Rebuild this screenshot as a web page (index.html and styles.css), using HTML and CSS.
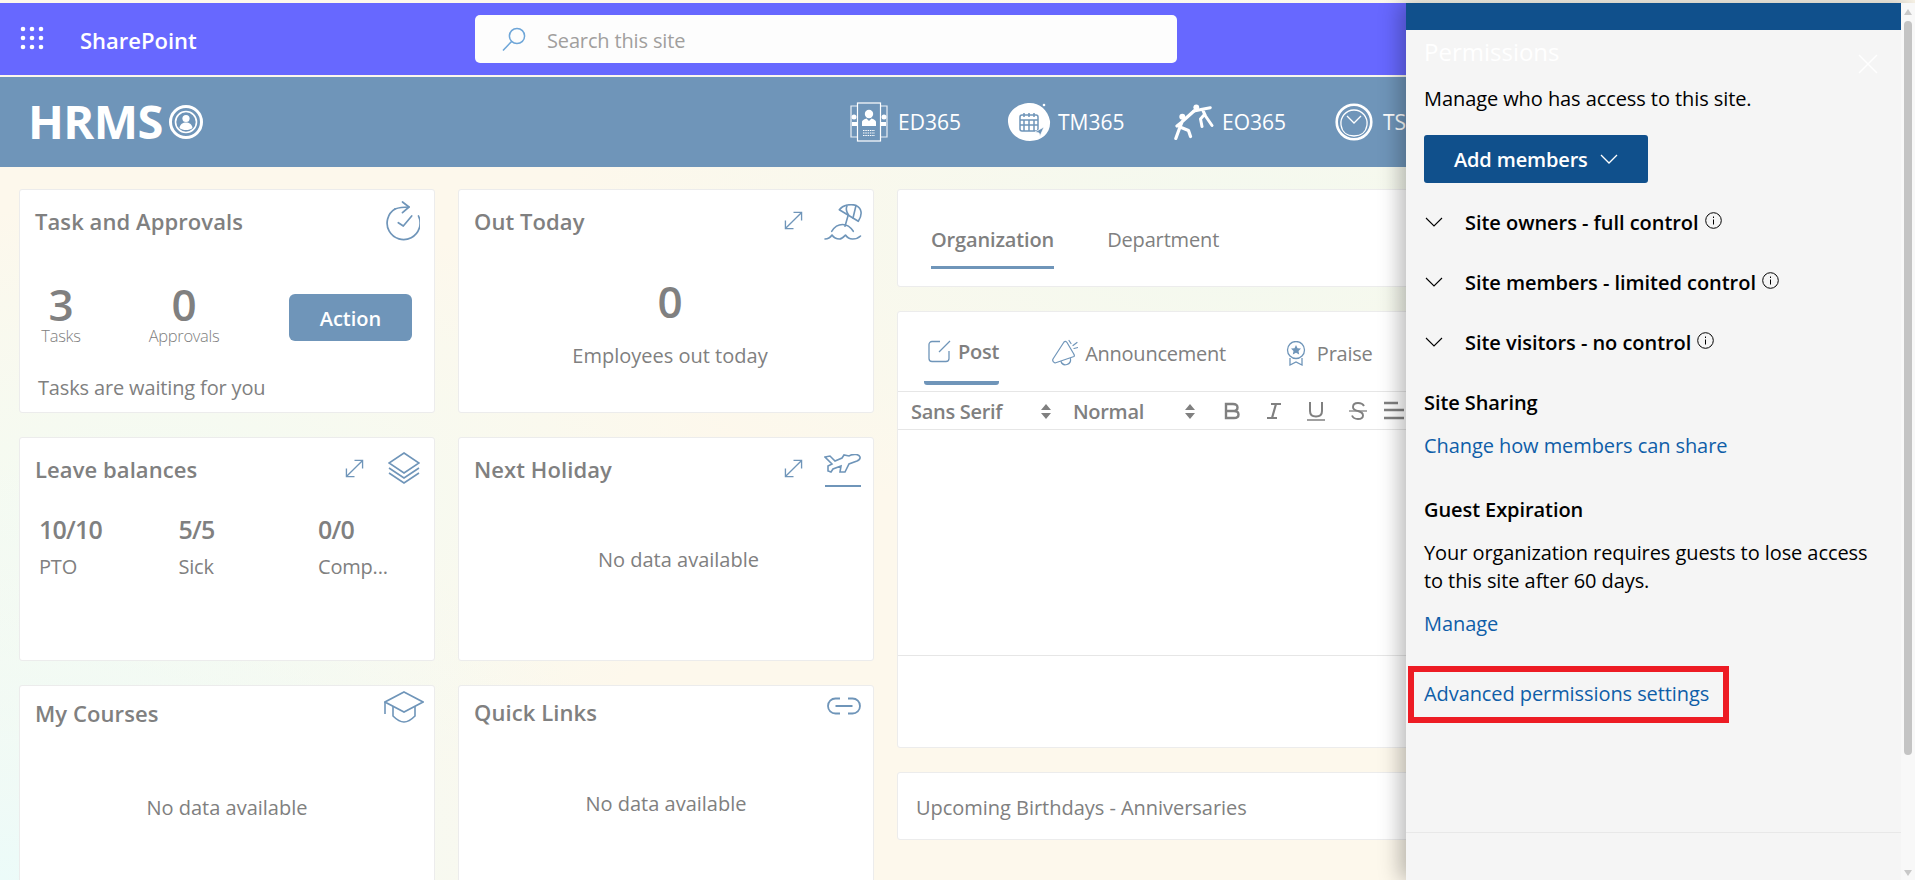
FILE: index.html
```html
<!DOCTYPE html>
<html lang="en">
<head>
<meta charset="utf-8">
<title>HRMS - SharePoint</title>
<link rel="stylesheet" href="styles.css">
</head>
<body>
<div class="page">
  <header class="suitebar">
    <svg class="waffle" viewBox="0 0 24 24" width="24" height="24" fill="#fff"><circle cx="3" cy="3" r="2.3"/><circle cx="12" cy="3" r="2.3"/><circle cx="21" cy="3" r="2.3"/><circle cx="3" cy="12" r="2.3"/><circle cx="12" cy="12" r="2.3"/><circle cx="21" cy="12" r="2.3"/><circle cx="3" cy="21" r="2.3"/><circle cx="12" cy="21" r="2.3"/><circle cx="21" cy="21" r="2.3"/></svg>
    <span class="brand">SharePoint</span>
    <div class="search">
      <svg viewBox="0 0 24 24" width="24" height="24" fill="none" stroke="#6ea6d8" stroke-width="1.5"><circle cx="15" cy="9" r="7.6"/><path d="M9.6 14.4 1 23.5"/></svg>
      <span>Search this site</span>
    </div>
  </header>

  <nav class="sitebar">
    <div class="logo">
      <span class="logo-text">HRMS</span>
      <svg viewBox="0 0 34 34" width="34" height="34" fill="none" stroke="#fff"><circle cx="17" cy="17" r="15.5" stroke-width="3"/><circle cx="17" cy="17" r="10.5" stroke-width="1.6"/><circle cx="17" cy="13.5" r="3.6" fill="#fff" stroke="none"/><path d="M10.5 23c.6-4 3.400-5.500 6.500-5.500s5.900 1.500 6.500 5.500c-1.800 1.400-4 2-6.500 2s-4.700-.6-6.500-2z" fill="#fff" stroke="none"/></svg>
    </div>
    <div class="apps">
      <div class="app app-ed">
        <svg viewBox="0 0 38 40" width="38" height="40" fill="none" stroke="#fff" stroke-width="1.2"><path d="M7 4H1v31h6M31 4h6v31h-6" opacity=".85"/><rect x="7.500" y="1" width="23" height="38"/><circle cx="19" cy="12" r="4.200" fill="#fff" stroke="none"/><path d="M12 24v-4c0-2 3-3 4.500-3.500L19 19l2.500-2.500C23 17 26 18 26 20v4z" fill="#fff" stroke="none"/><path d="M13 28.500h12M13 31h12M13 33.500h12" stroke-dasharray="1.500 .8"/><circle cx="4" cy="15" r="2.500" fill="#fff" stroke="none"/><circle cx="34" cy="15" r="2.500" fill="#fff" stroke="none"/><path d="M2 24v-4h5v4zM31 24v-4h5v4z" fill="#fff" stroke="none"/></svg>
        <span>ED365</span>
      </div>
      <div class="app app-tm">
        <svg viewBox="0 0 44 40" width="44" height="40"><path d="M20 1c10-1 20 6 22 18 1 12-8 20-20 20C10 39 1 31 0 20-1 10 9 2 20 1z" fill="#fff"/><circle cx="36" cy="3" r="1.300" fill="#fff"/><g fill="none" stroke="#6f95b9" stroke-width="1.500"><rect x="12" y="13" width="18" height="16" rx="2"/><path d="M16 11v4M21 11v4M26 11v4M12 18h18M16 18v11M21 18v11M26 18v11M12 23h18"/><path d="M27 30l9-5-4 9-1-3z" fill="#6f95b9" stroke="#fff" stroke-width=".7"/></g></svg>
        <span>TM365</span>
      </div>
      <div class="app app-eo">
        <svg viewBox="0 0 40 36" width="40" height="36" fill="none" stroke="#fff" stroke-width="3.200" stroke-linecap="round" stroke-linejoin="round"><circle cx="8.300" cy="12.700" r="3" fill="#fff" stroke="none"/><circle cx="22.300" cy="3.300" r="2.900" fill="#fff" stroke="none"/><path d="M8.300 17.500 20 7M8.300 17.500 6 23M8 18l-5 4M6 23 1.800 34.500M6 23l8.500 3.500 2 6"/><path d="M20 7l8.300-1.800 8-1.500M28.500 5.500 31.500 12l6.500 9.500M30 11l-3.500 4 1.500 7.500" stroke-width="3"/></svg>
        <span>EO365</span>
      </div>
      <div class="app app-ts">
        <svg viewBox="0 0 38 38" width="38" height="38" fill="none" stroke="#fff"><circle cx="19" cy="19" r="17.300" stroke-width="2.600"/><path d="M6 22c-1-8 5-15 13-15s14 7 13 15c-1 7-6 11-13 11S7 29 6 22z" stroke-width="1.300"/><path d="M12 13l7 7 7-7" stroke-width="1.300"/></svg>
        <span>TS365</span>
      </div>
    </div>
  </nav>

  <main class="board">
    <section class="card card-task">
      <div class="card-head">
        <h2>Task and Approvals</h2>
        <svg class="ico ico-task" viewBox="0 0 34 40" width="34" height="40" fill="none" stroke="#6f95b9" stroke-width="1.700" stroke-linecap="round" stroke-linejoin="round"><path d="M9 8A16.500 16.500 0 1 0 32.500 15"/><path d="M9 8c4-1.500 8-2 14-2"/><path d="M16.500 1 23 6l-6.500 5.700"/><path d="M12.300 21.700l5 3.300 8.400-10"/></svg>
      </div>
      <div class="task-stats">
        <div class="stat stat-a"><strong>3</strong><span>Tasks</span></div>
        <div class="stat stat-b"><strong>0</strong><span>Approvals</span></div>
        <button class="action">Action</button>
      </div>
      <p class="task-note">Tasks are waiting for you</p>
    </section>

    <section class="card card-out">
      <div class="card-head">
        <h2>Out Today</h2>
        <svg class="ico ico-expand" viewBox="0 0 20 20" width="19" height="19" fill="none" stroke="#6f95b9" stroke-width="1.400"><path d="M1.500 18.500 18.500 1.500M10 1.500h8.500V10M1.500 10v8.500H10"/></svg>
        <svg class="ico ico-beach" viewBox="0 0 38 38" width="38" height="38" fill="none" stroke="#6f95b9" stroke-width="1.600" stroke-linecap="round" stroke-linejoin="round"><path d="M15.300 5.700C19 1 27-.5 32 1.500 37.500 4 39 10 34.300 17.300z"/><path d="M23 2c-1.500 3-.5 6 1.500 9M32 1.500 29 14"/><path d="M24.300 10.700 21 22.300"/><path d="M7.700 27.300C11 22 15 20.500 18.500 20.500c4 0 8 2.500 10.800 6.800"/><path d="M1 35c3 0 5-1 7-4 2 3 5 4 7.500 4s4-2 6-4c2 3 4 4 7 4s6-1 8-3"/></svg>
      </div>
      <strong class="big-center">0</strong>
      <p class="out-note">Employees out today</p>
    </section>

    <div class="feed">
      <section class="card card-org">
        <div class="org-tabs">
          <span class="org-tab on">Organization</span>
          <span class="org-tab">Department</span>
        </div>
      </section>

      <section class="card card-post">
        <div class="post-tabs">
          <span class="post-tab on">
            <svg viewBox="0 0 23 23" width="23" height="23" fill="none" stroke="#6f95b9" stroke-width="1.300"><path d="M12 1.500H4A3 3 0 0 0 1 4.500v14a3 3 0 0 0 3 3h14a3 3 0 0 0 3-3V11"/><path d="M11 12 22 1"/></svg>
            Post
          </span>
          <span class="post-tab tab-ann">
            <svg viewBox="0 0 26 28" width="26" height="28" fill="none" stroke="#6f95b9" stroke-width="1.200" stroke-linecap="round" stroke-linejoin="round"><path d="M12 3 1 20c-1 2 0 3 2 4l19-6.500c1-1 0-2-.5-3L15 3.500c-1-1.500-2-1.500-3-.5z"/><path d="M9 22.500c1 3 3 4 6 3s4-3 3.500-6"/><path d="M17 1.500l2 3M21 6.500l4-3M22 9.500l4-1"/></svg>
            Announcement
          </span>
          <span class="post-tab tab-praise">
            <svg viewBox="0 0 20 25" width="20" height="25" fill="none" stroke="#6f95b9" stroke-width="1.300"><circle cx="10" cy="9" r="8.500"/><path d="M4 17v7l6-3 6 3v-7"/><path d="M10 4l1.500 3.200 3.500.4-2.500 2.400.7 3.500-3.200-1.700-3.200 1.700.7-3.500L5 7.600l3.500-.4z" fill="#6f95b9" stroke="none"/></svg>
            Praise
          </span>
        </div>
        <div class="toolbar">
          <span class="tool-select ts-font">Sans Serif<svg class="updown" viewBox="0 0 10 15" width="10" height="15" fill="#808080"><path d="M5 0l5 6H0zM5 15 0 9h10z"/></svg></span>
          <span class="tool-select ts-size">Normal<svg class="updown" viewBox="0 0 10 15" width="10" height="15" fill="#808080"><path d="M5 0l5 6H0zM5 15 0 9h10z"/></svg></span>
          <svg class="tool" viewBox="0 0 18 18" width="18" height="18" fill="none" stroke="#808080" stroke-width="2.400"><path d="M3 2h7c3 0 4.500 1.500 4.500 3.500S13 9 10 9H3zM3 9h8c3 0 4.500 1.500 4.500 3.500S14 16 11 16H3z"/></svg>
          <svg class="tool" viewBox="0 0 18 18" width="18" height="18" fill="none" stroke="#808080" stroke-width="2.200"><path d="M6 2h10M2 16h10M11 2 7 16"/></svg>
          <svg class="tool" viewBox="0 0 18 20" width="18" height="20" fill="none" stroke="#808080" stroke-width="2"><path d="M3 1v9c0 3.500 2.500 5.500 6 5.500s6-2 6-5.500V1"/><path d="M0 19h18" stroke-width="1.500"/></svg>
          <svg class="tool tool-strike" viewBox="0 0 18 18" width="18" height="18" fill="none" stroke="#808080" stroke-width="1.900"><path d="M15 4c-1-2-3-3-6-3S4 2.500 4 5c0 3 3 3.500 5 4s5 1.500 5 4.500-2.500 3.500-5 3.500-5-1-6-3.500"/><path d="M0 9h18" stroke-width="1.300"/></svg>
          <svg class="tool" viewBox="0 0 20 20" width="20" height="20" fill="none" stroke="#808080" stroke-width="2.400"><path d="M0 2h14M0 9h20M0 17h20"/></svg>
        </div>
        <div class="editor"></div>
        <div class="post-foot"></div>
      </section>

      <section class="card card-bday">
        <span>Upcoming Birthdays - Anniversaries</span>
      </section>
    </div>

    <section class="card card-leave">
      <div class="card-head">
        <h2>Leave balances</h2>
        <svg class="ico ico-expand" viewBox="0 0 20 20" width="19" height="19" fill="none" stroke="#6f95b9" stroke-width="1.400"><path d="M1.500 18.500 18.500 1.500M10 1.500h8.500V10M1.500 10v8.500H10"/></svg>
        <svg class="ico ico-layers" viewBox="0 0 32 32" width="32" height="32" fill="none" stroke="#6f95b9" stroke-width="1.600"><path d="M16 1 31 11 16 21 1 11z"/><path d="M1 16l15 10 15-10"/><path d="M1 21l15 10 15-10"/></svg>
      </div>
      <div class="balances">
        <div class="bal"><strong>10/10</strong><span>PTO</span></div>
        <div class="bal"><strong>5/5</strong><span>Sick</span></div>
        <div class="bal"><strong>0/0</strong><span>Comp...</span></div>
      </div>
    </section>

    <section class="card card-holiday">
      <div class="card-head">
        <h2>Next Holiday</h2>
        <svg class="ico ico-expand" viewBox="0 0 20 20" width="19" height="19" fill="none" stroke="#6f95b9" stroke-width="1.400"><path d="M1.500 18.500 18.500 1.500M10 1.500h8.500V10M1.500 10v8.500H10"/></svg>
        <svg class="ico ico-plane" viewBox="0 0 38 34" width="38" height="34" fill="none" stroke="#6f95b9" stroke-width="1.600"><path d="M1 3l5-1 5 5 7-3 2-3 5 1 2-1c3-1 8-1 9 2 .5 2-1 3-3 4l-8 3-4 8h-5l1-6-8 3-2 3-3-1v-5l4-2z"/><path d="M1 32h36" stroke-width="2"/></svg>
      </div>
      <p class="empty empty-holiday">No data available</p>
    </section>

    <section class="card card-courses">
      <div class="card-head">
        <h2>My Courses</h2>
        <svg class="ico ico-cap" viewBox="0 0 40 32" width="40" height="32" fill="none" stroke="#6f95b9" stroke-width="1.600"><path d="M20 1 39 11 20 21 1 11z"/><path d="M9 15v10c3 3 7 6 11 6s8-3 11-6V15"/><path d="M1 11v12"/></svg>
      </div>
      <p class="empty empty-courses">No data available</p>
    </section>

    <section class="card card-links">
      <div class="card-head">
        <h2>Quick Links</h2>
        <svg class="ico ico-link" viewBox="0 0 36 18" width="36" height="18" fill="none" stroke="#6f95b9" stroke-width="1.800"><path d="M14 1.500H9.500a7.500 7.500 0 0 0 0 15H14M22 1.500h4.500a7.500 7.500 0 0 1 0 15H22M9.500 9h17"/></svg>
      </div>
      <p class="empty empty-links">No data available</p>
    </section>
  </main>

  <aside class="panel">
    <div class="panel-main">
      <div class="panel-band"></div>
      <div class="panel-title">
        <h1>Permissions</h1>
        <svg viewBox="0 0 20 20" width="20" height="20" fill="none" stroke="#fff" stroke-width="1.400"><path d="M1 1l18 18M19 1 1 19"/></svg>
      </div>
      <p class="manage-who">Manage who has access to this site.</p>
      <button class="add-members">Add members
        <svg viewBox="0 0 18 10" width="18" height="10" fill="none" stroke="#fff" stroke-width="1.300"><path d="M1 1l8 8 8-8"/></svg>
      </button>
      <ul class="groups">
        <li><svg class="chev" viewBox="0 0 18 10" width="18" height="10" fill="none" stroke="#000" stroke-width="1.100"><path d="M1 1l8 8 8-8"/></svg>Site owners - full control<svg class="info" viewBox="0 0 17 17" width="17" height="17" fill="none" stroke="#000" stroke-width="1"><circle cx="8.500" cy="8.500" r="7.800"/><path d="M8.500 7.500v5M8.500 4.500v1.500"/></svg></li>
        <li><svg class="chev" viewBox="0 0 18 10" width="18" height="10" fill="none" stroke="#000" stroke-width="1.100"><path d="M1 1l8 8 8-8"/></svg>Site members - limited control<svg class="info" viewBox="0 0 17 17" width="17" height="17" fill="none" stroke="#000" stroke-width="1"><circle cx="8.500" cy="8.500" r="7.800"/><path d="M8.500 7.500v5M8.500 4.500v1.500"/></svg></li>
        <li><svg class="chev" viewBox="0 0 18 10" width="18" height="10" fill="none" stroke="#000" stroke-width="1.100"><path d="M1 1l8 8 8-8"/></svg>Site visitors - no control<svg class="info" viewBox="0 0 17 17" width="17" height="17" fill="none" stroke="#000" stroke-width="1"><circle cx="8.500" cy="8.500" r="7.800"/><path d="M8.500 7.500v5M8.500 4.500v1.500"/></svg></li>
      </ul>
      <h3 class="sec-sharing">Site Sharing</h3>
      <a class="plink link-share" href="#">Change how members can share</a>
      <h3 class="sec-guest">Guest Expiration</h3>
      <p class="guest-text">Your organization requires guests to lose access to this site after 60 days.</p>
      <a class="plink link-manage" href="#">Manage</a>
      <div class="redbox"><a class="plink" href="#">Advanced permissions settings</a></div>
      <div class="panel-foot"></div>
    </div>
    <div class="scroll">
      <i class="arrow up"></i>
      <i class="thumb"></i>
      <i class="arrow down"></i>
    </div>
  </aside>
</div>
</body>
</html>
```

FILE: styles.css
```css
* { box-sizing: border-box; }
html, body { margin: 0; height: 100%; }
body {
  font-family: "Open Sans", "Noto Sans", "Liberation Sans", sans-serif;
  color: #808080;
  overflow: hidden;
}
h1, h2, h3, p, ul { margin: 0; padding: 0; }
.page {
  position: relative;
  width: 1915px;
  height: 880px;
  overflow: hidden;
  padding-top: 3px;
  display: flex;
  flex-direction: column;
  background:
    radial-gradient(650px 420px at 0 880px, #ecfbf9 0%, rgba(236,251,249,0) 100%),
    radial-gradient(600px 300px at 150px 500px, #f3fbf3 0%, rgba(243,251,243,0) 100%),
    radial-gradient(700px 300px at 1250px 240px, #f3f9ef 0%, rgba(243,249,239,0) 100%),
    #fdf8ec;
}

/* suite bar */
.suitebar {
  height: 72px;
  background: #6768ff;
  display: flex;
  align-items: center;
  flex: none;
  padding-left: 20px;
}
.waffle { flex: none; margin-top: -3px; }
.brand {
  margin-left: 36px;
  width: 395px;
  color: #fff;
  font-size: 22px;
  font-weight: 600;
  padding-top: 2px;
}
.search {
  width: 702px;
  height: 48px;
  background: #fdfdfd;
  border-radius: 5px;
  display: flex;
  align-items: center;
  padding-left: 27px;
  color: #a19f9d;
  font-size: 20px;
  letter-spacing: -.15px;
}
.search span { margin-left: 21px; padding-top: 2px; }

/* site header */
.sitebar {
  height: 90px;
  margin-top: 2px;
  background: #6f95b9;
  display: flex;
  align-items: center;
  flex: none;
  color: #fff;
}
.logo {
  margin-left: 28px;
  display: flex;
  align-items: center;
  width: 822px;
  margin-top: -3px;
}
.logo-text {
  font-size: 47px;
  font-weight: 700;
  letter-spacing: -.6px;
  line-height: 50px;
}
.logo svg { margin-left: 6px; margin-top: 2px; }
.apps {
  display: flex;
  align-items: center;
  font-size: 21px;
}
.app { display: flex; align-items: center; }
.app svg { flex: none; }
.app-ed span { margin-left: 10px; width: 110px; }
.app-tm span { margin-left: 6px; width: 116px; }
.app-eo span { margin-left: 8px; width: 113px; }
.app-ts span { margin-left: 10px; }

/* board */
.board {
  flex: 1;
  min-height: 0;
  padding: 22px 0 0 19px;
  display: grid;
  grid-template-columns: 416px 416px 1000px;
  grid-template-rows: 224px 224px 224px;
  column-gap: 23px;
  row-gap: 24px;
}
.card {
  background: #fff;
  border: 1px solid #ececec;
  border-radius: 3px;
  min-width: 0;
}
.card-head {
  display: flex;
  align-items: flex-start;
  padding: 17px 14px 0 15px;
  height: 60px;
}
.card-courses .card-head, .card-links .card-head { padding-top: 12px; }
.card-out .card-head, .card-holiday .card-head, .card-links .card-head { padding-right: 11px; }
.card-head h2 {
  font-size: 22px;
  line-height: 30px;
  font-weight: 600;
  color: #808080;
  letter-spacing: .08px;
  margin-right: auto;
  margin-top: -1px;
}
.card-courses .card-head h2 { margin-top: 0; }
.ico { flex: none; }
.ico-task { margin-top: -6px; }
.ico-expand { margin-top: 4px; margin-right: 21px; }
.card-leave .ico-expand { margin-right: 24px; }
.ico-beach { margin-top: -3px; }
.ico-layers { margin-top: -3px; }
.ico-plane { margin-top: -1px; }
.ico-cap { margin-top: -7px; margin-right: -4px; }
.ico-link { margin-top: -1px; }

/* task card */
.task-stats { display: flex; height: 90px; }
.stat { display: flex; flex-direction: column; align-items: center; }
.stat strong {
  font-size: 44px;
  font-weight: 600;
  line-height: 45px;
}
.stat span {
  font-size: 16.500px;
  font-weight: 300;
  line-height: 18px;
  letter-spacing: -.3px;
}
.stat-a { width: 40px; margin-left: 21px; margin-top: 32px; }
.stat-b { width: 74px; margin-left: 66px; margin-top: 32px; }
.action {
  margin: 44px 0 0 68px;
  width: 123px;
  height: 47px;
  padding-top: 3px;
  background: #6f95b9;
  border: 0;
  border-radius: 6px;
  color: #fff;
  font: 600 20px "Open Sans", sans-serif;
}
.task-note {
  margin: 35px 0 0 18px;
  font-size: 20px;
  line-height: 26px;
  letter-spacing: -.15px;
}

/* out today */
.big-center {
  display: block;
  text-align: center;
  font-size: 44px;
  font-weight: 600;
  line-height: 50px;
  margin-top: 26px;
  padding-left: 8px;
}
.out-note {
  text-align: center;
  font-size: 20px;
  line-height: 26px;
  margin-top: 17px;
  padding-left: 8px;
}

/* leave */
.balances { display: flex; padding: 14px 0 0 19px; }
.bal { flex: none; width: 139.500px; display: flex; flex-direction: column; }
.bal strong { font-size: 25px; line-height: 34px; font-weight: 600; letter-spacing: -.8px; }
.bal span { font-size: 20px; line-height: 26px; margin-top: 8px; letter-spacing: -.2px; }

/* empty state */
.empty {
  text-align: center;
  font-size: 20px;
  line-height: 26px;
}
.empty-holiday { margin-top: 49px; margin-left: 25px; }
.empty-courses { margin-top: 49px; }
.empty-links { margin-top: 45px; }

/* feed column */
.feed {
  grid-column: 3;
  grid-row: 1 / 4;
  display: flex;
  flex-direction: column;
  gap: 24px;
}
.card-org { height: 98px; padding: 33px 0 0 33px; }
.org-tabs { display: flex; gap: 53px; font-size: 20px; letter-spacing: -.15px; }
.org-tab { height: 46px; line-height: 34px; }
.org-tab.on { font-weight: 600; border-bottom: 3px solid #6f95b9; }

.card-post { height: 437px; display: flex; flex-direction: column; }
.post-tabs {
  height: 80px;
  display: flex;
  border-bottom: 1px solid #e6e6e6;
  font-size: 20px;
  letter-spacing: -.25px;
  padding-left: 26px;
}
.post-tab { display: flex; align-items: center; height: 69px; padding-top: 13px; }
.post-tab svg { margin-right: 9px; }
.post-tab.on {
  font-weight: 600;
  height: 73px;
  padding: 9px 0 0 4px;
  border-bottom: 4px solid #6f95b9;
  border-radius: 0 0 3px 3px;
}
.post-tab.on svg { margin-right: 7px; }
.tab-ann { margin-left: 53px; }
.tab-ann svg { margin-right: 7px; }
.tab-praise { margin-left: 60px; }
.tab-praise svg { margin-right: 11px; }
.toolbar {
  height: 38px;
  border-bottom: 1px solid #e6e6e6;
  display: flex;
  align-items: center;
  padding-left: 13px;
  font-size: 20px;
  font-weight: 600;
  letter-spacing: -.3px;
}
.tool-select { display: flex; align-items: center; padding-top: 1px; }
.ts-font { width: 162px; }
.ts-size { width: 150px; }
.updown { margin-left: auto; margin-right: 22px; flex: none; }
.ts-size .updown { margin-right: 28px; }
.tool { margin-right: 24px; flex: none; }
.tool-strike { margin-right: 17px; }
.editor { height: 226px; border-bottom: 1px solid #e6e6e6; }
.post-foot { flex: 1; }
.card-bday {
  height: 68px;
  display: flex;
  align-items: center;
  padding: 2px 0 0 18px;
  font-size: 20px;
  letter-spacing: -.03px;
}

/* permissions panel */
.panel {
  position: absolute;
  top: 3px;
  right: 0;
  bottom: 0;
  width: 509px;
  display: flex;
  box-shadow: -6px 0 20px rgba(0,0,0,.28);
  background: #f5f5f5;
  color: #000;
  font-size: 20px;
  letter-spacing: -.08px;
}
.panel-main { width: 495px; position: relative; display: flex; flex-direction: column; }
.panel-band { height: 27px; background: #10508c; flex: none; }
.panel-title {
  display: flex;
  justify-content: space-between;
  padding: 4px 23px 0 18px;
  height: 36px;
  color: #fff;
}
.panel-title h1 { font-size: 24px; font-weight: 400; line-height: 36px; letter-spacing: 0; }
.panel-title svg { margin-top: 20px; }
.manage-who { margin: 19px 0 0 18px; line-height: 28px; }
.add-members {
  margin: 22px 0 0 18px;
  width: 224px;
  height: 48px;
  background: #10508c;
  border: 0;
  border-radius: 3px;
  color: #fff;
  font: 600 20px "Open Sans", sans-serif;
  letter-spacing: -.15px;
  display: flex;
  align-items: center;
  padding-left: 30px;
}
.add-members svg { margin-left: 12px; }
.groups { list-style: none; margin: 25px 0 0 19px; font-weight: 600; letter-spacing: -.04px; }
.groups li { height: 60px; display: flex; align-items: flex-start; line-height: 30px; }
.chev { margin: 9px 22px 0 0; flex: none; }
.info { margin: 4px 0 0 6px; flex: none; }
.sec-sharing, .sec-guest { margin-left: 18px; font-size: 20px; font-weight: 600; line-height: 28px; }
.sec-sharing { margin-top: 1px; }
.plink { color: #0f5ea8; text-decoration: none; display: block; line-height: 28px; }
.link-share { margin: 15px 0 0 18px; }
.sec-guest { margin-top: 36px; }
.guest-text { margin: 15px 14px 0 18px; line-height: 28px; }
.link-manage { margin: 15px 0 0 18px; }
.redbox {
  margin: 28px 0 0 2px;
  width: 321px;
  height: 57px;
  border: 6px solid #ed1c24;
  padding: 8px 0 0 10px;
}
.panel-foot {
  position: absolute;
  left: 0;
  right: 0;
  top: 829px;
  border-top: 1px solid #e8e8e8;
}
.scroll {
  width: 14px;
  position: relative;
  background: #f8f8f8;
}
.thumb {
  position: absolute;
  left: 3px;
  width: 8px;
  top: 18px;
  height: 734px;
  border-radius: 4px;
  background: #c4c4c4;
}
.arrow {
  position: absolute;
  left: 3px;
  width: 0;
  height: 0;
  border-left: 4px solid transparent;
  border-right: 4px solid transparent;
}
.arrow.up { top: 6px; border-bottom: 6px solid #c8c8c8; }
.arrow.down { bottom: 4px; border-top: 6px solid #c8c8c8; }
```
